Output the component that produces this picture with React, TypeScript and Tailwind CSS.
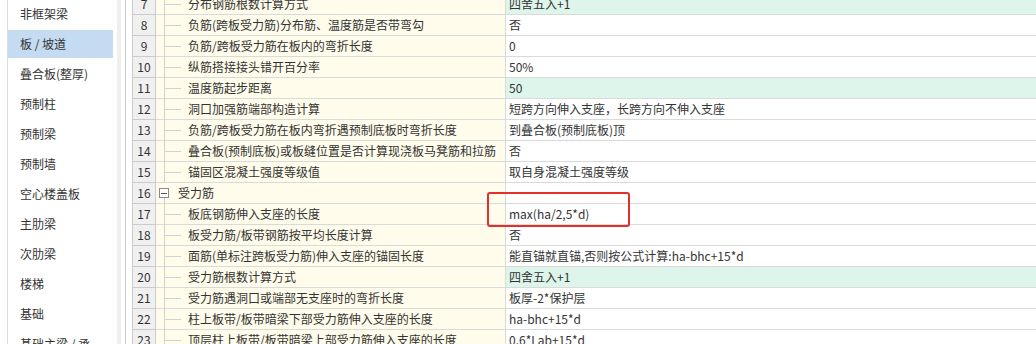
const font = { fontFamily: '"Microsoft YaHei", "Noto Sans CJK SC", "Noto Sans", sans-serif' };

const menu = [
  '非框架梁',
  '板 / 坡道',
  '叠合板(整厚)',
  '预制柱',
  '预制梁',
  '预制墙',
  '空心楼盖板',
  '主肋梁',
  '次肋梁',
  '楼梯',
  '基础',
  '基础主梁 / 承台梁',
];

type Row = { no: number; name: string; value: string; group?: boolean; mint?: boolean };

const rows: Row[] = [
  { no: 7, name: '分布钢筋根数计算方式', value: '四舍五入+1', mint: true },
  { no: 8, name: '负筋(跨板受力筋)分布筋、温度筋是否带弯勾', value: '否' },
  { no: 9, name: '负筋/跨板受力筋在板内的弯折长度', value: '0' },
  { no: 10, name: '纵筋搭接接头错开百分率', value: '50%' },
  { no: 11, name: '温度筋起步距离', value: '50', mint: true },
  { no: 12, name: '洞口加强筋端部构造计算', value: '短跨方向伸入支座，长跨方向不伸入支座' },
  { no: 13, name: '负筋/跨板受力筋在板内弯折遇预制底板时弯折长度', value: '到叠合板(预制底板)顶' },
  { no: 14, name: '叠合板(预制底板)或板缝位置是否计算现浇板马凳筋和拉筋', value: '否' },
  { no: 15, name: '锚固区混凝土强度等级值', value: '取自身混凝土强度等级' },
  { no: 16, name: '受力筋', value: '', group: true },
  { no: 17, name: '板底钢筋伸入支座的长度', value: 'max(ha/2,5*d)' },
  { no: 18, name: '板受力筋/板带钢筋按平均长度计算', value: '否' },
  { no: 19, name: '面筋(单标注跨板受力筋)伸入支座的锚固长度', value: '能直锚就直锚,否则按公式计算:ha-bhc+15*d' },
  { no: 20, name: '受力筋根数计算方式', value: '四舍五入+1', mint: true },
  { no: 21, name: '受力筋遇洞口或端部无支座时的弯折长度', value: '板厚-2*保护层' },
  { no: 22, name: '柱上板带/板带暗梁下部受力筋伸入支座的长度', value: 'ha-bhc+15*d' },
  { no: 23, name: '顶层柱上板带/板带暗梁上部受力筋伸入支座的长度', value: '0.6*Lab+15*d' },
];

function TreeCell({ row }: { row: Row }) {
  if (row.group) {
    return (
      <div className="relative flex h-full items-center pl-[1px]">
        <span className="flex h-[10px] w-[10px] items-center justify-center border border-[#8a8a8a] bg-white">
          <span className="h-px w-[6px] bg-[#555]" />
        </span>
        <span className="absolute left-[6px] top-[15px] h-[6px] w-px bg-[#cfcfcf]" />
        <span className="ml-[9px]">{row.name}</span>
      </div>
    );
  }
  return (
    <div className="relative flex h-full items-center">
      <span className="absolute left-[6px] top-0 h-[21px] w-px bg-[#d2d2d2]" />
      <span className="ml-[7px] h-px w-[16px] bg-[#d2d2d2]" />
      <span className="ml-[7px] whitespace-nowrap">{row.name}</span>
    </div>
  );
}

export default function App() {
  return (
    <div className="relative flex h-[344px] w-[1036px] overflow-hidden bg-white text-[12px] text-[#333]" style={font}>
      <div className="w-[7px] shrink-0" />
      <div className="flex w-[110px] shrink-0 flex-col border-l border-[#dcdcdc] pr-[4px]">
        {menu.map((m, i) =>
          i === menu.length - 1 ? (
            <div key={m} className="shrink-0 py-[6px] pl-[12px] pr-[12px] leading-[16px]">
              {m}
            </div>
          ) : (
            <div
              key={m}
              className={
                'mb-[2px] flex h-[28px] shrink-0 items-center whitespace-nowrap pl-[12px] ' +
                (i === 1 ? 'bg-[#c4dbf2]' : '')
              }
            >
              {m}
            </div>
          )
        )}
      </div>
      <div className="w-[4px] shrink-0 bg-[#efefef]" />
      <div className="w-[4px] shrink-0" />
      <div className="w-px shrink-0 bg-[#c9c9c9]" />
      <div className="w-[6px] shrink-0" />
      <div className="mt-[-6px] flex flex-1 flex-col">
        {rows.map((r) => (
          <div key={r.no} className="flex h-[21px] shrink-0">
            <div className="flex w-[24px] shrink-0 items-center justify-center border-x border-b border-[#cbcbcb] bg-[#f0f0f0]">
              {r.no}
            </div>
            <div className="w-[350px] shrink-0 border-b border-r border-[#dadada] bg-[#fffceb] pl-[2px]">
              <TreeCell row={r} />
            </div>
            <div
              className={
                'flex flex-1 items-center whitespace-nowrap border-b border-[#dadada] pl-[3px] ' +
                (r.mint ? 'bg-[#ddf5eb]' : 'bg-white')
              }
            >
              {r.value}
            </div>
          </div>
        ))}
      </div>
      <div className="pointer-events-none absolute left-[487px] top-[192px] h-[35px] w-[143px] rounded-[3px] border-2 border-[#e3302b]" />
    </div>
  );
}
